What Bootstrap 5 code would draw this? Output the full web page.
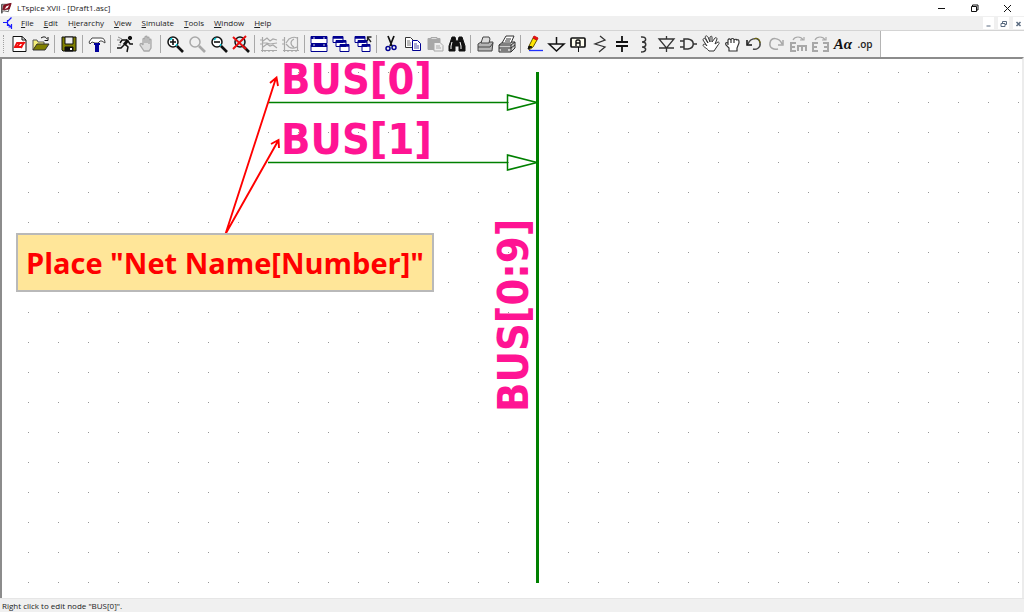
<!DOCTYPE html>
<html lang="en">
<head>
<meta charset="utf-8">
<meta name="viewport" content="width=device-width, initial-scale=1">
<title>LTspice XVII - [Draft1.asc]</title>
<link href="https://cdn.jsdelivr.net/npm/bootstrap@5.3.0/dist/css/bootstrap.min.css" rel="stylesheet">
<style>
  body { font-family: "Open Sans", sans-serif; font-size: 8px; line-height: 12px; color: #222; }
  .titlebar { height: 16px; }
  .menubar { height: 14px; background: #f0f0f0; padding-left: 3px; }
  .menubar a { color: #222; text-decoration: none; }
  .menus { gap: 10px; padding-left: 7px; }
  .toolstrip { height: 27px; border-top: 1px solid #d4d4d4; }
  .tools { width: 881px; background: #f0f0f0; border-right: 1px solid #b4b4b4; padding-left: 3px; }
  .grip { width: 1px; height: 18px; border-left: 1px dotted #a0a0a0; margin-right: 4px; }
  .divider { width: 1px; height: 18px; background: #a8a8a8; margin: 0 3px 0 2px; }
  .plain { border: 0; padding: 0; background: none; display: flex; align-items: center; justify-content: center; }
  .tool { width: 22px; height: 22px; flex: none; }
  .winbtn { width: 33px; height: 16px; }
  .childbtn { width: 11px; height: 12px; background: #fff; }
  .glyph { font: 700 15px/16px "Liberation Serif", serif; color: #111; }
  .opglyph { font: 10px/12px "Open Sans", sans-serif; font-weight: 600; color: #222; }
  svg { display: block; fill: none; stroke: #111; }
  .sheet { border-top: 2px solid #8c8c8c; border-left: 2px solid #8c8c8c; border-right: 2px solid #ececec; min-height: 0; }
  .sheet svg { overflow: visible; }
  .net { font-family: "DejaVu Sans Condensed", "DejaVu Sans", sans-serif; font-weight: 700; font-size: 43px; fill: #ff1493; stroke: none; }
  .note { left: 14px; top: 174px; width: 418px; height: 59px; border: 2px solid #b9b9b9; background: #ffe699; color: #f00; font: 700 29px/56px "Open Sans", sans-serif; }
  .statusbar { height: 14px; background: #f0f0f0; border-top: 1px solid #e6e6e6; padding-left: 2px; line-height: 14px; }
  .off { stroke: #a8a8a8; }
  .blue { stroke: #000090; }
  .slate { stroke: #5a6b80; }
</style>
</head>
<body class="vh-100 d-flex flex-column overflow-hidden bg-white">

<header>
  <div class="titlebar d-flex align-items-center">
    <svg class="flex-shrink-0" width="13" height="14" viewBox="0 0 14 14"><path d="M2 3h9l-2 8-5-1-2 2z" fill="#fff" stroke="#555"/><path d="M4 4l8-2-2 6-7 1z" fill="#8b1020" stroke="#7a1020"/><path d="M5 8l2-3 3-1-2 3z" fill="#fff" stroke="none"/><path d="M2 3v10" stroke="#333"/></svg>
    <span class="ms-1">LTspice XVII - [Draft1.asc]</span>
    <div class="ms-auto d-flex">
      <button class="plain winbtn" aria-label="Minimize"><svg width="9" height="9"><path d="M1 4.500h7"/></svg></button>
      <button class="plain winbtn" aria-label="Restore"><svg width="9" height="9"><path d="M1.500 2.500h5v5h-5zM2.500 2.500v-1.500h5.500v5h-1.500"/></svg></button>
      <button class="plain winbtn" aria-label="Close"><svg width="9" height="9"><path d="M1 1l7 7M8 1l-7 7"/></svg></button>
    </div>
  </div>

  <nav class="menubar d-flex align-items-center">
    <svg class="flex-shrink-0" width="11" height="12" viewBox="0 0 11 12"><path d="M0 5.500h4M4.500 3v6M4.500 4.500l4-4M4.500 7l4 3V12M5.500 10h3V7" stroke="#1a1aff" stroke-width="1.200"/></svg>
    <div class="d-flex flex-grow-1 menus">
      <a href="#"><u>F</u>ile</a>
      <a href="#"><u>E</u>dit</a>
      <a href="#">H<u>i</u>erarchy</a>
      <a href="#"><u>V</u>iew</a>
      <a href="#"><u>S</u>imulate</a>
      <a href="#"><u>T</u>ools</a>
      <a href="#"><u>W</u>indow</a>
      <a href="#"><u>H</u>elp</a>
    </div>
    <div class="d-flex gap-1">
      <button class="plain childbtn" aria-label="Minimize document"><svg class="slate" width="9" height="9"><path d="M2.500 7h4"/></svg></button>
      <button class="plain childbtn" aria-label="Restore document"><svg class="slate" width="9" height="9"><path d="M2 4.500h4v3H2zM3.500 4V2.500h4v3H6"/></svg></button>
      <button class="plain childbtn" aria-label="Close document"><svg class="slate" width="9" height="9"><path d="M2.500 3l4 4M6.500 3l-4 4" stroke-width="1.500"/></svg></button>
    </div>
  </nav>

  <div class="toolstrip d-flex">
    <div class="tools d-flex align-items-center" role="toolbar" aria-label="Schematic tools">
      <div class="grip"></div>
      <button class="plain tool" aria-label="New schematic"><svg width="22" height="22" viewBox="-11 -11 22 22"><path d="M-6-7.500H3L7-4V7.500H-6z" fill="#fff"/><path d="M3-7.500V-4h4"/><path d="M-4 3l2-4h7l-3 4zM1-1l-3 4M5-2l-3 6" stroke="#f01010" stroke-width="1.800"/></svg></button>
      <button class="plain tool" aria-label="Open"><svg width="22" height="22" viewBox="-11 -11 22 22"><path d="M-8 6v-10h4l1 2h6v3" fill="#f5f07a" stroke="#555"/><path d="M-8 6l4-6H8L4 6z" fill="#808000" stroke="#333"/><path d="M0-6c3-2 5-1 6 1M7-7v3.500H3.500"/></svg></button>
      <div class="divider"></div>
      <button class="plain tool" aria-label="Save"><svg width="22" height="22" viewBox="-11 -11 22 22"><path d="M-7-7H7V7H-6L-7 6z" fill="#808000"/><path d="M-4-7H4V0H-4z" fill="#eee"/><path d="M-4 3H4V7H-4z" fill="#111"/><path d="M2 4v2" stroke="#fff" stroke-width="2"/></svg></button>
      <div class="divider"></div>
      <button class="plain tool" aria-label="Control panel"><svg width="22" height="22" viewBox="-11 -11 22 22"><path d="M-8-2l3-4H4c3 0 4 2 4 5L5-3H3l-2 2h-3l-3-1-2 2z" fill="#fff" stroke="#444"/><path d="M-3 0h6" stroke="#00009c" stroke-width="2"/><path d="M0 0v8" stroke="#00009c" stroke-width="4"/></svg></button>
      <div class="divider"></div>
      <button class="plain tool" aria-label="Run"><svg width="22" height="22" viewBox="-11 -11 22 22"><circle cx="5" cy="-6" r="1.700" fill="#111"/><path d="M3-4l-4 5" stroke-width="3"/><path d="M3-3l2 3h3M2-4h-5l-2 3M0 0l3 3-1 5M-1 1l-3 3h-4" stroke-width="1.500"/><path d="M-7-7l4 2M-8-4h3M-7 1h3" stroke="#888"/></svg></button>
      <button class="plain tool" aria-label="Halt"><svg class="off" width="22" height="22" viewBox="-11 -11 22 22"><path d="M-3 7l-4-6c0-2 2-2 3 0v-6c1-1 2-1 2 0v4-6c1-1 2-1 2 0v6-5c1-1 2-1 2 0v6-4c1-1 2-1 2 0v8l-2 3z" fill="#ddd" stroke-width="1.300"/></svg></button>
      <div class="divider"></div>
      <button class="plain tool" aria-label="Zoom in"><svg width="22" height="22" viewBox="-11 -11 22 22"><circle cx="-2" cy="-2" r="5" fill="#fff" stroke-width="1.500"/><path d="M-5-4l2-2M1 2l1-2" stroke="#00c8d8" stroke-width="1.500"/><path d="M-5-2H1M-2-5V1" stroke-width="1.600"/><path d="M2 2l6 6" stroke-width="2.600"/></svg></button>
      <button class="plain tool" aria-label="Pan"><svg class="off" width="22" height="22" viewBox="-11 -11 22 22"><circle cx="-2" cy="-2" r="5" stroke-width="1.500"/><path d="M2 2l6 6" stroke-width="2.600"/></svg></button>
      <button class="plain tool" aria-label="Zoom out"><svg width="22" height="22" viewBox="-11 -11 22 22"><circle cx="-2" cy="-2" r="5" fill="#fff" stroke-width="1.500"/><path d="M-5-4l2-2M1 2l1-2" stroke="#00c8d8" stroke-width="1.500"/><path d="M-5-2H1" stroke-width="1.600"/><path d="M2 2l6 6" stroke-width="2.600"/></svg></button>
      <button class="plain tool" aria-label="Zoom to fit"><svg width="22" height="22" viewBox="-11 -11 22 22"><circle cx="-1" cy="-2" r="5" fill="#cdf3f5" stroke-width="1.500"/><path d="M2 2l6 6" stroke-width="2.600"/><path d="M-8-7L5 5M5-8L-8 5" stroke="#e81010" stroke-width="2"/></svg></button>
      <div class="divider"></div>
      <button class="plain tool" aria-label="Pick visible traces"><svg class="off" width="22" height="22" viewBox="-11 -11 22 22"><path d="M-6.500-7V8M-8 6.500H8M-4 6v2M0 6v2M4 6v2M-9-4h2M-9 0h2M-6-3l4-3 3 3 3-2 4 1M-6 3l4-3 3 2 3-1 4 3M-6-1h4l3 1 7-1" stroke-width="1.200"/></svg></button>
      <button class="plain tool" aria-label="Autorange"><svg class="off" width="22" height="22" viewBox="-11 -11 22 22"><path d="M-6.500-7V8M-8 6.500H8M-3 6v2M1 6v2M5 6v2M-9-4h2M-9 0h2M-5-1l3-4c3-2 6-2 8-1M-5 0l3 3c3 2 6 1 8 0M3-5c-4 2-4 6 0 8M6.500-7V6" stroke-width="1.200"/></svg></button>
      <div class="divider"></div>
      <button class="plain tool" aria-label="Tile windows"><svg class="blue" width="22" height="22" viewBox="-11 -11 22 22"><path d="M-8-7.500H8V-.5H-8zM-8 .5H8v7H-8z" fill="#fff"/><path d="M-8-6.500H8M-8 1.500H8" stroke-width="3"/><path d="M-6-6h2M4-6h2M-6 1h2M4 1h2" stroke="#ccd"/></svg></button>
      <button class="plain tool" aria-label="Cascade windows"><svg class="blue" width="22" height="22" viewBox="-11 -11 22 22"><path d="M-8-7.500H2v6H-8zM-5-3.500H5v6H-5zM-1 .5H8v7H-1z" fill="#fff"/><path d="M-8-6.500H2M-5-2.500H5M-1 1.500H8" stroke-width="2.500"/></svg></button>
      <button class="plain tool" aria-label="Close windows"><svg class="blue" width="22" height="22" viewBox="-11 -11 22 22"><path d="M-8-7.500H2v6H-8zM-5-3.500H4v6H-5zM-1 .5H7v7H-1z" fill="#fff"/><path d="M-8-6.500H2M-5-2.500H4M-1 1.500H7" stroke-width="2.500"/><path d="M8-2L5-6M4.500-3V-7H8.500" stroke="#222" stroke-width="1.300"/></svg></button>
      <div class="divider"></div>
      <button class="plain tool" aria-label="Cut"><svg width="22" height="22" viewBox="-11 -11 22 22"><path d="M-3-8L1 2M3-8L-1 2" stroke-width="1.700"/><circle cx="-3" cy="4.500" r="2" stroke="#000090" stroke-width="1.500"/><circle cx="3" cy="3.500" r="2" stroke="#000090" stroke-width="1.500"/></svg></button>
      <button class="plain tool" aria-label="Copy"><svg width="22" height="22" viewBox="-11 -11 22 22"><path d="M-7.500-6.500h5l3 3v7h-8z" fill="#fff" stroke="#333"/><path d="M-6-3h3M-6-1h4M-6 1h4" stroke="#777"/><path d="M-.5-3.500h5l3 3v7h-8z" fill="#fff" stroke="#000090"/><path d="M1 0h3M1 2h5M1 4h5" stroke="#55a"/></svg></button>
      <button class="plain tool" aria-label="Paste"><svg class="off" width="22" height="22" viewBox="-11 -11 22 22"><path d="M-7-5.500H5v11H-7z" fill="#a8a8a8"/><path d="M-4-6.500h6v2h-6z" fill="#ddd"/><path d="M-1-1.500h6l3 3v5.500h-9z" fill="#eee"/><path d="M1 2h4M1 4h5"/></svg></button>
      <button class="plain tool" aria-label="Find"><svg width="22" height="22" viewBox="-11 -11 22 22"><path d="M-5-7h3l1 4h2l1-4h3l3 9v5H2V2h-4v5h-6V2z" fill="#111"/><path d="M-5-2l-1 4v3M3-2l1 4v3" stroke="#fff"/></svg></button>
      <div class="divider"></div>
      <button class="plain tool" aria-label="Print setup"><svg width="22" height="22" viewBox="-11 -11 22 22"><path d="M-7 0l3-2H8l-1 9H-7z" fill="#b4b4b4" stroke="#444"/><path d="M-4-1l2-6h6l1 2-1 4z" fill="#ddd" stroke="#444"/><path d="M-7 3H5l3-4" stroke="#444"/></svg></button>
      <button class="plain tool" aria-label="Print"><svg width="22" height="22" viewBox="-11 -11 22 22"><path d="M-8 1l4-3H8v6L4 8H-8z" fill="#ccc" stroke="#333"/><path d="M-5-1l4-7h8l-3 7z" fill="#fff" stroke="#333"/><path d="M-1-5h5M-2-3h5M-8 1H4l4-3M4 1v7M-8 4H4l4-3M-6 6h7" stroke="#333"/></svg></button>
      <div class="divider"></div>
      <button class="plain tool" aria-label="Draw wire"><svg width="22" height="22" viewBox="-11 -11 22 22"><path d="M-6 2l4-8 4 2-4 7-4 3z" fill="#ffe600" stroke="#665500"/><path d="M-2-6l1-2 4 2-1 2z" fill="#f01010" stroke="#d01010"/><path d="M-7 5l1-3 3 1z" fill="#111"/><path d="M-6 6.500H8" stroke="#2030ff" stroke-width="1.300"/></svg></button>
      <button class="plain tool" aria-label="Ground"><svg width="22" height="22" viewBox="-11 -11 22 22"><path d="M-.5-7V0M-8 0H7L-.5 7z" stroke-width="1.500"/></svg></button>
      <button class="plain tool" aria-label="Label net"><svg width="22" height="22" viewBox="-11 -11 22 22"><rect x="-8" y="-6" width="14" height="9" rx="1" fill="#fffef0" stroke-width="1.700"/><path d="M-.5 3v5"/><path d="M-3 2v-5l1-1h2l1 1v5M-3-1h4" stroke-width="1.400"/></svg></button>
      <button class="plain tool" aria-label="Resistor"><svg width="22" height="22" viewBox="-11 -11 22 22"><path d="M-1-8L4-4-6 0 4 3-2 8" stroke="#333" stroke-width="1.300"/></svg></button>
      <button class="plain tool" aria-label="Capacitor"><svg width="22" height="22" viewBox="-11 -11 22 22"><path d="M-1-8v6M-1 2v6M-7-2H5M-7 2H5" stroke-width="1.800"/></svg></button>
      <button class="plain tool" aria-label="Inductor"><svg width="22" height="22" viewBox="-11 -11 22 22"><path d="M-4-7c6-1 6 5 1 5 5 0 5 5 0 5 5 0 5 5-1 5" stroke="#333" stroke-width="1.500"/></svg></button>
      <button class="plain tool" aria-label="Diode"><svg width="22" height="22" viewBox="-11 -11 22 22"><path d="M-.5-8v3M-.5 4v4M-8-5H7L-.5 4zM-8 4H7" stroke="#333" stroke-width="1.300"/></svg></button>
      <button class="plain tool" aria-label="Component"><svg width="22" height="22" viewBox="-11 -11 22 22"><path d="M-5-5H-1c7 1 7 9 0 10H-5zM-9-3h4M-9 3h4M4 0h4" stroke="#333" stroke-width="1.500"/></svg></button>
      <button class="plain tool" aria-label="Move"><svg width="22" height="22" viewBox="-11 -11 22 22"><path d="M-2 7c-2-3-6-4-6-6 1-2 3 0 4 1l-4-6c0-2 2-2 3 0l2 3-3-6c1-2 2-1 3 0l2 5V-7c1-1 2-1 2 0v5l3-4c1-1 2 0 2 1L4 0l3-2c1 0 2 1 0 3L3 7z" fill="#fff" stroke="#333"/></svg></button>
      <button class="plain tool" aria-label="Drag"><svg width="22" height="22" viewBox="-11 -11 22 22"><path d="M-4 7v-3l-3-3c-1-2 0-3 2-2v-3c1-2 2-1 3 0 0-2 3-2 3 0 1-1 3-1 3 0 2-1 2 1 2 3L4 4v3zM-5-1v2M-2-4v3M1-4v3" fill="#fff" stroke="#333" stroke-width="1.200"/></svg></button>
      <button class="plain tool" aria-label="Undo"><svg width="22" height="22" viewBox="-11 -11 22 22"><path d="M-7 0c3-7 11-7 12-1C6 4 1 6-2 5" stroke="#444" stroke-width="1.500"/><path d="M-1-5c4-2 6 1 6 4" stroke="#777000"/><path d="M-8-4v5h5" stroke-width="1.500"/></svg></button>
      <button class="plain tool" aria-label="Redo"><svg class="off" width="22" height="22" viewBox="-11 -11 22 22"><path d="M5 0C2-7-6-7-7-1-8 4-3 6 1 5M6-4v5H1" stroke-width="1.500"/></svg></button>
      <button class="plain tool" aria-label="Rotate"><svg class="off" width="22" height="22" viewBox="-11 -11 22 22"><path d="M-3-1h-5v8h5M-8 3h4M-1 7V2h8v5M3 2v5" stroke-width="2"/><path d="M-6-4c2-4 8-4 10 0M5-7v3H1" stroke-width="1.200"/></svg></button>
      <button class="plain tool" aria-label="Mirror"><svg class="off" width="22" height="22" viewBox="-11 -11 22 22"><path d="M-3-1h-5v8h5M-8 3h4M2-1h5v8H2M7 3H3" stroke-width="2"/><path d="M-6-4c2-4 8-4 10 0M5-7v3H1" stroke-width="1.200"/></svg></button>
      <button class="plain tool glyph" aria-label="Text"><i>A&alpha;</i></button>
      <button class="plain tool opglyph" aria-label="SPICE directive">.op</button>
    </div>
  </div>
</header>

<main class="sheet flex-grow-1 position-relative">
  <svg width="100%" height="100%">
    <defs>
      <pattern id="grid" x="26" y="13" width="30" height="30" patternUnits="userSpaceOnUse"><rect width="1" height="1" fill="#999" stroke="none"/></pattern>
    </defs>
    <rect width="100%" height="100%" fill="url(#grid)" stroke="none"/>
    <g stroke="#008000">
      <path d="M535.500 13V524" stroke-width="3"/>
      <path d="M266 43.500H505M266 103.500H505" stroke-width="1.400"/>
      <path d="M505.500 36V51L535 43.500zM505.500 96V111L535 103.500z" stroke-width="1.500"/>
    </g>
    <text class="net" x="279" y="35">BUS[0]</text>
    <text class="net" x="279" y="95">BUS[1]</text>
    <text class="net" transform="translate(526 353) rotate(-90)">BUS[0:9]</text>
    <path d="M223.500 175L274 19M268 24L274.500 18.500L276 27M223.500 175L276 82M269 85L276.500 81L277 89" stroke="#f00" stroke-width="1.900"/>
  </svg>
  <div class="note position-absolute text-center text-nowrap">Place "Net Name[Number]"</div>
</main>

<footer class="statusbar">Right click to edit node "BUS[0]".</footer>

<script src="https://cdn.jsdelivr.net/npm/bootstrap@5.3.0/dist/js/bootstrap.bundle.min.js"></script>
</body>
</html>
